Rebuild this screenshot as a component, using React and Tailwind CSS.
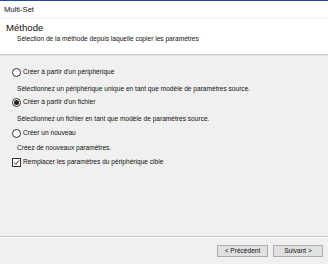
import React from 'react';

function Radio({ checked, label }) {
    return (
        <div className="flex items-center h-[12px]">
            <span className="relative w-[9px] h-[9px] rounded-full border border-[#333] bg-white mr-[2px] flex items-center justify-center">
                {checked && <span className="w-[5px] h-[5px] rounded-full bg-[#222]"></span>}
            </span>
            <span>{label}</span>
        </div>
    );
}

export default function App() {
    return (
        <div
            className="w-[328px] h-[264px] flex flex-col bg-[#f0f0f0] text-[#111] overflow-hidden"
            style={{ fontFamily: '"Liberation Sans", Arial, sans-serif' }}
            data-name="multiset-wizard"
        >
            <div className="h-[1px] bg-[#2c4a80]"></div>
            <div className="h-[17px] bg-white flex items-center pl-[4px] text-[7.6px]" data-name="title-bar">
                Multi-Set
            </div>
            <div className="h-[36px] bg-white border-t border-[#f2f2f2] pl-[6px] pt-[3px]" data-name="header">
                <div className="text-[9.6px] leading-[12px]">Méthode</div>
                <div className="text-[6.6px] leading-[10px] pl-[11px]">Sélection de la méthode depuis laquelle copier les paramètres</div>
            </div>
            <div className="h-[2px] border-t border-[#c9c9c9] bg-[#e3e3e3]"></div>

            <div className="flex-1 pl-[12px] pt-[10px] text-[6.6px]" data-name="options">
                <Radio label="Créer à partir d'un périphérique" />
                <div className="pl-[5px] mt-[5px] h-[12px] leading-[12px]">Sélectionnez un périphérique unique en tant que modèle de paramètres source.</div>
                <div className="mt-[1px]"><Radio checked label="Créer à partir d'un fichier" /></div>
                <div className="pl-[5px] mt-[5px] h-[12px] leading-[12px]">Sélectionnez un fichier en tant que modèle de paramètres source.</div>
                <div className="mt-[2px]"><Radio label="Créer un nouveau" /></div>
                <div className="pl-[5px] mt-[3px] h-[12px] leading-[12px]">Créez de nouveaux paramètres.</div>
                <div className="flex items-center h-[12px] mt-[2px]">
                    <span className="w-[9px] h-[9px] border border-[#333] bg-white mr-[2px] flex items-center justify-center">
                        <svg width="7" height="7" viewBox="0 0 7 7">
                            <path d="M1 3.5 L2.8 5.3 L6 1.5" fill="none" stroke="#222" strokeWidth="1" />
                        </svg>
                    </span>
                    <span>Remplacer les paramètres du périphérique cible</span>
                </div>
            </div>

            <div className="h-[2px] border-t border-[#c4c4c4] bg-[#fafafa]"></div>
            <div className="h-[26px] flex items-center justify-end pr-[5px] gap-[5px] text-[6.6px]" data-name="footer">
                <button className="w-[51px] h-[12px] bg-[#e1e1e1] border border-[#adadad] flex items-center justify-center">&lt; Précédent</button>
                <button className="w-[50px] h-[12px] bg-[#e1e1e1] border border-[#adadad] flex items-center justify-center">Suivant &gt;</button>
            </div>
        </div>
    );
}
